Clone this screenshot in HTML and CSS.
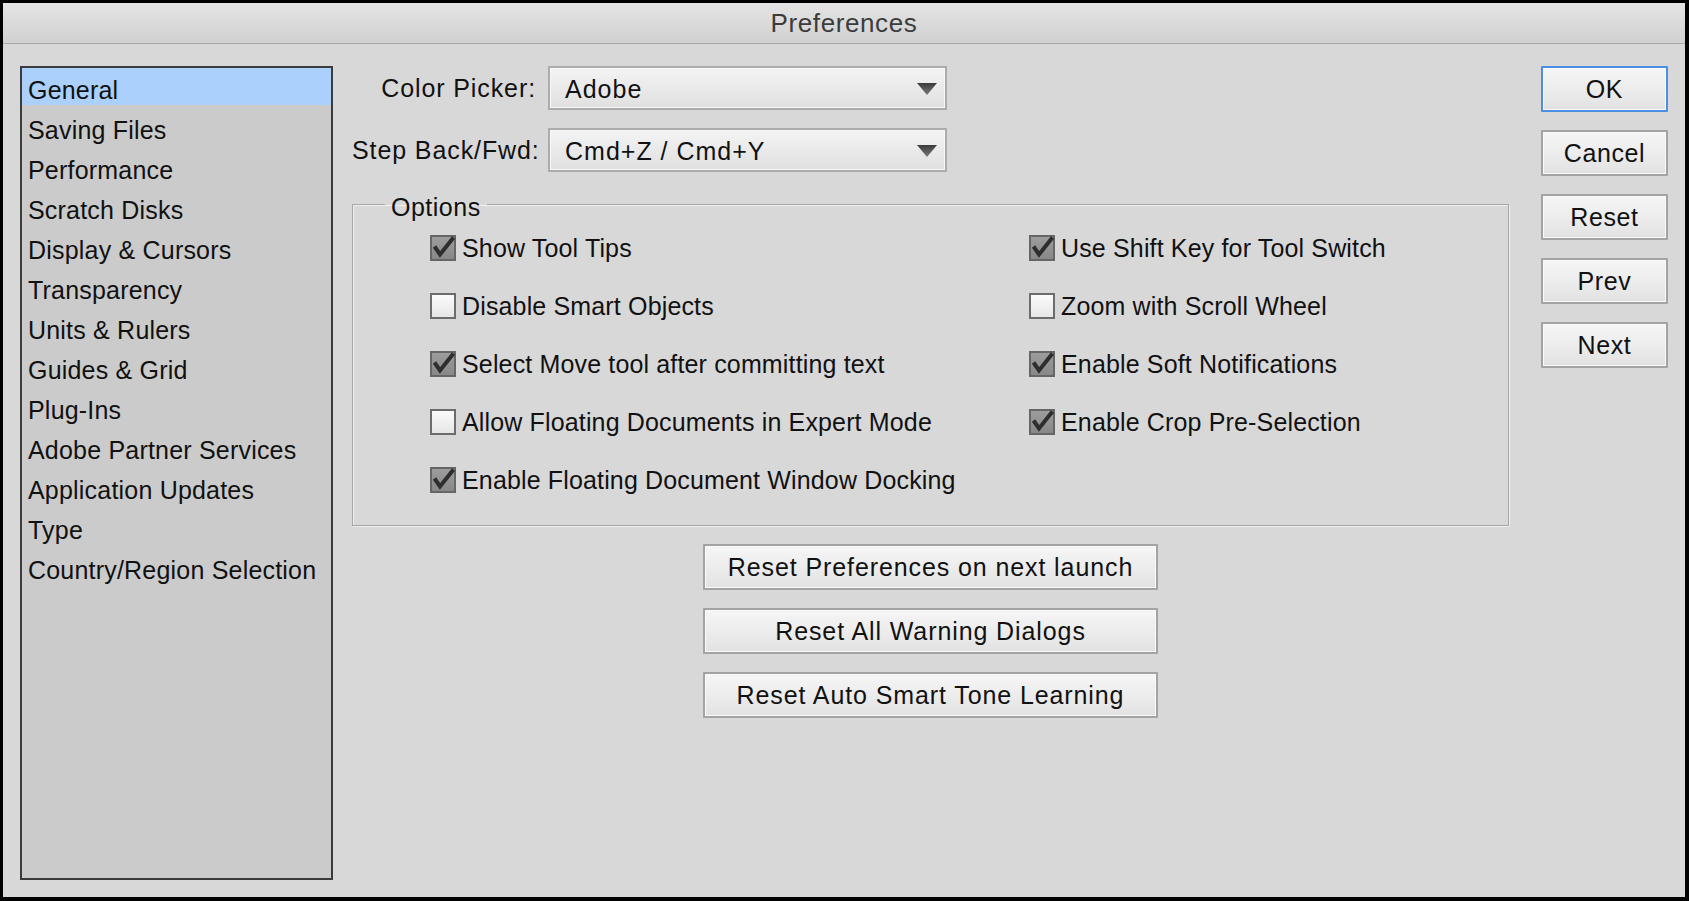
FILE: index.html
```html
<!DOCTYPE html>
<html lang="en">
<head>
<meta charset="utf-8">
<title>Preferences</title>
<link rel="stylesheet" href="styles.css">
</head>
<body>
<div class="window">
  <div class="titlebar">Preferences</div>
  <div class="content">
    <ul class="sidebar">
      <li class="item selected">General</li>
      <li class="item">Saving Files</li>
      <li class="item">Performance</li>
      <li class="item">Scratch Disks</li>
      <li class="item">Display &amp; Cursors</li>
      <li class="item">Transparency</li>
      <li class="item">Units &amp; Rulers</li>
      <li class="item">Guides &amp; Grid</li>
      <li class="item">Plug-Ins</li>
      <li class="item">Adobe Partner Services</li>
      <li class="item">Application Updates</li>
      <li class="item">Type</li>
      <li class="item">Country/Region Selection</li>
    </ul>

    <div class="main">
      <div class="form">
        <label class="form-label">Color Picker:</label>
        <div class="select">
          <span class="select-value">Adobe</span>
          <svg class="arrow" width="20" height="12" viewBox="0 0 20 12"><defs><linearGradient id="ag1" x1="0" y1="0" x2="0" y2="1"><stop offset="0" stop-color="#3a3a3a"/><stop offset="1" stop-color="#7a7a7a"/></linearGradient></defs><polygon points="0,0 20,0 10,12" fill="url(#ag1)"/></svg>
        </div>
        <label class="form-label">Step Back/Fwd:</label>
        <div class="select">
          <span class="select-value">Cmd+Z / Cmd+Y</span>
          <svg class="arrow" width="20" height="12" viewBox="0 0 20 12"><defs><linearGradient id="ag2" x1="0" y1="0" x2="0" y2="1"><stop offset="0" stop-color="#3a3a3a"/><stop offset="1" stop-color="#7a7a7a"/></linearGradient></defs><polygon points="0,0 20,0 10,12" fill="url(#ag2)"/></svg>
        </div>
      </div>

      <fieldset class="group">
        <legend class="legend">Options</legend>
        <div class="options">
          <div class="opt"><span class="cb checked"><svg width="26" height="26" viewBox="0 0 26 26"><path d="M4.5 11.5 L10 19.5 L23.5 2.5" fill="none" stroke="#2e2e2e" stroke-width="4" stroke-linejoin="miter" stroke-linecap="butt"/></svg></span><span class="opt-text">Show Tool Tips</span></div>
          <div class="opt"><span class="cb checked"><svg width="26" height="26" viewBox="0 0 26 26"><path d="M4.5 11.5 L10 19.5 L23.5 2.5" fill="none" stroke="#2e2e2e" stroke-width="4" stroke-linejoin="miter" stroke-linecap="butt"/></svg></span><span class="opt-text">Use Shift Key for Tool Switch</span></div>
          <div class="opt"><span class="cb"></span><span class="opt-text">Disable Smart Objects</span></div>
          <div class="opt"><span class="cb"></span><span class="opt-text">Zoom with Scroll Wheel</span></div>
          <div class="opt"><span class="cb checked"><svg width="26" height="26" viewBox="0 0 26 26"><path d="M4.5 11.5 L10 19.5 L23.5 2.5" fill="none" stroke="#2e2e2e" stroke-width="4" stroke-linejoin="miter" stroke-linecap="butt"/></svg></span><span class="opt-text">Select Move tool after committing text</span></div>
          <div class="opt"><span class="cb checked"><svg width="26" height="26" viewBox="0 0 26 26"><path d="M4.5 11.5 L10 19.5 L23.5 2.5" fill="none" stroke="#2e2e2e" stroke-width="4" stroke-linejoin="miter" stroke-linecap="butt"/></svg></span><span class="opt-text">Enable Soft Notifications</span></div>
          <div class="opt"><span class="cb"></span><span class="opt-text">Allow Floating Documents in Expert Mode</span></div>
          <div class="opt"><span class="cb checked"><svg width="26" height="26" viewBox="0 0 26 26"><path d="M4.5 11.5 L10 19.5 L23.5 2.5" fill="none" stroke="#2e2e2e" stroke-width="4" stroke-linejoin="miter" stroke-linecap="butt"/></svg></span><span class="opt-text">Enable Crop Pre-Selection</span></div>
          <div class="opt"><span class="cb checked"><svg width="26" height="26" viewBox="0 0 26 26"><path d="M4.5 11.5 L10 19.5 L23.5 2.5" fill="none" stroke="#2e2e2e" stroke-width="4" stroke-linejoin="miter" stroke-linecap="butt"/></svg></span><span class="opt-text">Enable Floating Document Window Docking</span></div>
        </div>
      </fieldset>

      <div class="resets">
        <button class="btn wide">Reset Preferences on next launch</button>
        <button class="btn wide">Reset All Warning Dialogs</button>
        <button class="btn wide">Reset Auto Smart Tone Learning</button>
      </div>
    </div>

    <div class="actions">
      <button class="btn side default">OK</button>
      <button class="btn side">Cancel</button>
      <button class="btn side">Reset</button>
      <button class="btn side">Prev</button>
      <button class="btn side">Next</button>
    </div>
  </div>
</div>
</body>
</html>
```

FILE: styles.css
```css
html, body {
  margin: 0;
  padding: 0;
  background: #000;
}

body {
  font-family: "Liberation Sans", Arial, sans-serif;
  font-size: 25px;
  color: #111;
}

.window {
  width: 1689px;
  height: 901px;
  box-sizing: border-box;
  border-style: solid;
  border-color: #000;
  border-width: 3px 4px 4px 3px;
  background: #d8d8d8;
  display: flex;
  flex-direction: column;
}

.titlebar {
  height: 40px;
  line-height: 40px;
  flex: none;
  text-align: center;
  font-size: 26px;
  letter-spacing: 0.6px;
  color: #3c3c3c;
  background: linear-gradient(#e4e4e4, #d1d1d1);
  border-bottom: 1px solid #a6a6a6;
}

.content {
  flex: 1;
  display: flex;
  padding: 22px 17px 17px 17px;
  min-height: 0;
}

/* Sidebar */
.sidebar {
  list-style: none;
  margin: 0;
  padding: 0;
  width: 313px;
  box-sizing: border-box;
  border: 2px solid #3b3b3b;
  background: #cbcbcb;
  flex: none;
}

.item {
  height: 40px;
  line-height: 44px;
  padding-left: 6px;
  white-space: nowrap;
  letter-spacing: 0.2px;
}

.item.selected {
  background: linear-gradient(#aad0fb, #aad0fb) no-repeat 0 0 / 100% 37px;
}

/* Main column */
.main {
  width: 1157px;
  margin-left: 19px;
  flex: none;
  display: flex;
  flex-direction: column;
}

.form {
  display: grid;
  grid-template-columns: 184px 399px;
  column-gap: 12px;
  row-gap: 18px;
  align-items: center;
}

.form-label {
  text-align: right;
  white-space: nowrap;
  letter-spacing: 0.9px;
}

.select {
  height: 44px;
  box-sizing: border-box;
  border: 2px solid #acacac;
  background: linear-gradient(#f4f4f4, #e0e0e0);
  box-shadow: inset 0 0 0 1px #f8f8f8;
  display: flex;
  align-items: center;
  justify-content: space-between;
  padding: 2px 8px 0 15px;
}

.select-value {
  letter-spacing: 1px;
}

.arrow {
  display: block;
}

/* Options group */
.group {
  margin: 14px 0 0 0;
  padding: 13px 20px 32px 0;
  border: 1px solid #a6a6a6;
  box-shadow: inset 1px 1px 0 #eeeeee, 1px 1px 0 #eeeeee;
  min-width: 0;
}

.legend {
  padding: 6px 6px 0 6px;
  margin-left: 32px;
  line-height: 30px;
  letter-spacing: 0.5px;
}

.options {
  display: grid;
  grid-template-columns: 599px 1fr;
  row-gap: 32px;
  padding-left: 77px;
}

.opt {
  display: flex;
  align-items: center;
  height: 26px;
  white-space: nowrap;
}

.cb {
  width: 26px;
  height: 26px;
  box-sizing: border-box;
  border: 2px solid #6c6c6c;
  background: linear-gradient(#fbfbfb, #e6e6e6);
  flex: none;
  position: relative;
}

.cb.checked {
  border-color: #666;
  background: linear-gradient(#9d9d9d, #888888);
}

.cb svg {
  position: absolute;
  left: -2px;
  top: -2px;
}

.opt-text {
  margin-left: 6px;
  letter-spacing: 0.15px;
}

/* Buttons */
.btn {
  font-family: "Liberation Sans", Arial, sans-serif;
  font-size: 25px;
  color: #111;
  height: 46px;
  box-sizing: border-box;
  border: 2px solid #a3a3a3;
  border-radius: 1px;
  background: linear-gradient(#f6f6f6, #e2e2e2);
  box-shadow: inset 0 0 0 1px #fafafa;
  padding: 0;
  letter-spacing: 0.9px;
  cursor: default;
}

.resets {
  margin-top: 18px;
  display: flex;
  flex-direction: column;
  align-items: center;
  gap: 18px;
}

.btn.wide {
  width: 455px;
}

.actions {
  margin-left: 32px;
  width: 127px;
  flex: none;
  display: flex;
  flex-direction: column;
  gap: 18px;
}

.btn.side {
  width: 127px;
  letter-spacing: 0.6px;
}

.btn.default {
  border-color: #4a8fe3;
}
```
